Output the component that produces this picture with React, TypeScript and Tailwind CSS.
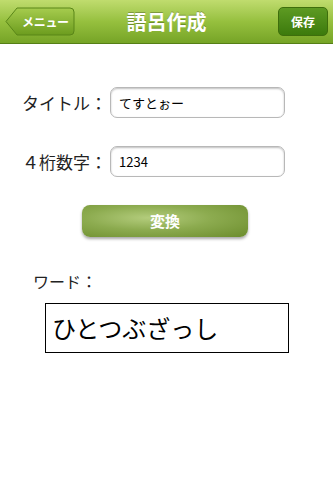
import { useState } from "react";

export default function App() {
    const [title, setTitle] = useState("てすとぉー");
    const [digits, setDigits] = useState("1234");
    const word = "ひとつぶざっし";

    return (
        <div className="w-[333px] h-[480px] bg-white flex flex-col" style={{ fontFamily: '"Noto Sans CJK JP", "Liberation Sans", sans-serif' }}>
            <div className="h-[44px] flex items-center justify-between px-[5px] bg-gradient-to-b from-[#c0dc6e] via-[#96c03e] to-[#76a426] border-b border-[#557f16] relative">
                <div className="relative h-[29px] w-[70px] flex items-center">
                    <svg className="absolute inset-0" width="70" height="29" viewBox="0 0 70 29">
                        <defs>
                            <linearGradient id="bk" x1="0" y1="0" x2="0" y2="1">
                                <stop offset="0" stopColor="#a6cc4e" />
                                <stop offset="1" stopColor="#6c9c1e" />
                            </linearGradient>
                        </defs>
                        <path d="M1 14.5 L12 1 H65 Q69 1 69 5 V24 Q69 28 65 28 H12 Z" fill="url(#bk)" stroke="#5a8618" strokeWidth="1" />
                    </svg>
                    <span className="relative pl-[17px] text-[12px] text-white font-bold tracking-tight">メニュー</span>
                </div>
                <div className="absolute left-0 right-0 text-center text-white text-[20px] font-bold pointer-events-none [text-shadow:0_-1px_0_rgba(0,0,0,0.25)]">語呂作成</div>
                <div className="h-[29px] w-[50px] rounded-[5px] border border-[#3e6e0c] bg-gradient-to-b from-[#5d9a22] to-[#3c7a0c] flex items-center justify-center text-white text-[12px] font-bold">保存</div>
            </div>

            <div className="flex flex-col pt-[43px]">
                <div className="flex items-center pl-[22px]">
                    <span className="w-[88px] shrink-0 whitespace-nowrap text-[17px] text-[#222]">タイトル：</span>
                    <input
                        value={title}
                        onChange={e => setTitle(e.target.value)}
                        className="w-[175px] h-[31px] rounded-[7px] border border-[#b8b8b8] shadow-[inset_0_1px_2px_rgba(0,0,0,0.25)] px-[8px] text-[13px] text-black outline-none"
                    />
                </div>
                <div className="flex items-center pl-[22px] mt-[28px]">
                    <span className="w-[88px] shrink-0 whitespace-nowrap text-[17px] text-[#222]">４桁数字：</span>
                    <input
                        value={digits}
                        onChange={e => setDigits(e.target.value)}
                        className="w-[175px] h-[31px] rounded-[7px] border border-[#b8b8b8] shadow-[inset_0_1px_2px_rgba(0,0,0,0.25)] px-[8px] text-[13px] text-black outline-none"
                    />
                </div>
                <div className="flex justify-center mt-[28px] pr-[3px]">
                    <button className="w-[166px] h-[32px] rounded-[8px] bg-[radial-gradient(ellipse_at_40%_40%,#b3cc7c_0%,#8cab4f_45%,#6b8c2c_100%)] shadow-[0_2px_3px_rgba(0,0,0,0.35)] text-white text-[15px] font-bold">
                        変換
                    </button>
                </div>
                <div className="pl-[33px] mt-[32px] text-[16px] text-[#222]">ワード：</div>
                <div className="ml-[45px] mt-[10px] w-[244px] h-[50px] border border-black flex items-center px-[6px] text-[24px] text-black">
                    {word}
                </div>
            </div>
        </div>
    );
}
